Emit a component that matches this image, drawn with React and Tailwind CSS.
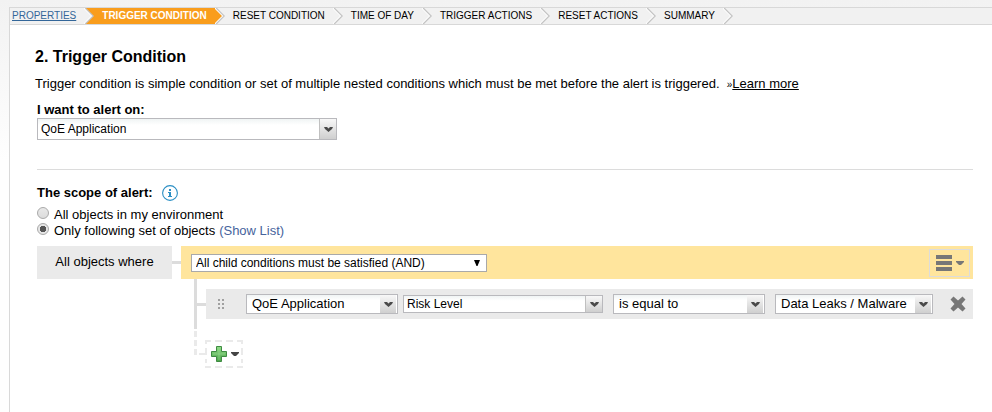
import { useState } from "react";

const steps = [
  { id: "properties", label: "PROPERTIES", done: true },
  { id: "trigger", label: "TRIGGER CONDITION", active: true },
  { id: "reset", label: "RESET CONDITION" },
  { id: "time", label: "TIME OF DAY" },
  { id: "trigger-actions", label: "TRIGGER ACTIONS" },
  { id: "reset-actions", label: "RESET ACTIONS" },
  { id: "summary", label: "SUMMARY" },
];

function Chevron({ left, right }) {
  return (
    <svg className="w-[10px] h-4 shrink-0" viewBox="0 0 10 16" fill="none">
      {left && <path d="M0 0L8 8L0 16Z" fill="#f99d1c" />}
      {right && <path d="M1 0H10V16H1L9 8Z" fill="#f99d1c" />}
      <path d="M0 0L8 8L0 16" stroke="#fff" strokeWidth="1.5" />
      <path d="M1.2 0L9.2 8L1.2 16" stroke="#c4c4c4" strokeWidth="1.2" />
    </svg>
  );
}

function Wizard() {
  return (
    <nav className="flex items-center border-y border-l border-[#d8d8d8] bg-[#f1f1f1] text-[10px] leading-4 whitespace-nowrap">
      {steps.map((step, i) => (
        <div key={step.id} className="flex">
          <span
            className={`pr-2 ${i === 0 ? "pl-[2px]" : "pl-2"} ${
              step.active ? "bg-[#f99d1c] text-white font-bold" : ""
            }`}
          >
            {step.done ? (
              <a href="#properties" className="text-[#336699] underline">
                {step.label}
              </a>
            ) : (
              step.label
            )}
          </span>
          <Chevron left={step.active} right={steps[i + 1]?.active} />
        </div>
      ))}
    </nav>
  );
}

function Combo({ id, label, options, className, selectClass, flat }) {
  return (
    <div className={`relative border border-[#b9b9bd] bg-white ${className}`}>
      <select
        id={id}
        aria-label={label}
        className={`block w-full h-full appearance-none bg-linear-to-b from-[#f0f4f4] to-white to-30% pr-5 outline-none ${selectClass}`}
      >
        {options.map((o) => (
          <option key={o}>{o}</option>
        ))}
      </select>
      <span
        className={`pointer-events-none absolute right-0 top-0 h-full w-[17px] bg-linear-to-b from-[#f8f8f8] to-[#cfcfcf] flex items-center justify-center ${
          flat ? "border-r border-white" : "border-l border-[#c0c0c0]"
        }`}
      >
        <svg className="w-[9px] h-[5px]" viewBox="0 0 9 5">
          <path d="M0 0H3L4.500 1.500L6 0H9L8 2L4.500 5L1 2Z" fill="#4a4a4a" />
        </svg>
      </span>
    </div>
  );
}

function Caret({ color }) {
  return (
    <svg className="w-2 h-1" viewBox="0 0 8 4">
      <path d="M0 0H8V1L5 4H3L0 1Z" fill={color} />
    </svg>
  );
}

function InfoIcon() {
  return (
    <svg className="w-4 h-4" viewBox="0 0 16 16" fill="none">
      <circle cx="8" cy="8" r="7.400" stroke="#2b8fc4" strokeWidth="1.100" />
      <path d="M7 4h2v2H7zM6 7h3v4h1v1H6v-1h1V8H6z" fill="#2b8fc4" />
    </svg>
  );
}

function ConditionRow() {
  return (
    <div className="flex-1 flex items-center h-[30px] pr-[7px] bg-[#eaeaea]">
      <svg className="w-[6px] h-[10px] ml-3 mr-[22px] shrink-0" viewBox="0 0 6 10" fill="#a0a0a0">
        <path d="M0 0h2v2H0zM4 0h2v2H4zM0 4h2v2H0zM4 4h2v2H4zM0 8h2v2H0zM4 8h2v2H4z" />
      </svg>
      <Combo
        label="Object type"
        options={["QoE Application"]}
        className="w-[152px] h-5"
        selectClass="pl-[5px] text-[13px]"
        flat
      />
      <Combo
        label="Property"
        options={["Risk Level"]}
        className="w-[200px] h-[18px] ml-[5px]"
        selectClass="pl-[3px] text-xs"
      />
      <Combo
        label="Operator"
        options={["is equal to"]}
        className="w-[152px] h-5 ml-[10px]"
        selectClass="pl-[5px] text-[13px]"
        flat
      />
      <Combo
        label="Value"
        options={["Data Leaks / Malware"]}
        className="w-[158px] h-5 ml-[10px]"
        selectClass="pl-[5px] text-[13px]"
        flat
      />
      <button aria-label="Remove condition" className="ml-auto">
        <svg className="block w-4 h-4" viewBox="0 0 16 16">
          <path
            d="M3.500 0.500L8 4.500L12.500 0.500L15.500 3.500L11.500 8L15.500 12.500L12.500 15.500L8 11.500L3.500 15.500L0.500 12.500L4.500 8L0.500 3.500Z"
            fill="#777"
          />
        </svg>
      </button>
    </div>
  );
}

function AddButton() {
  return (
    <button aria-label="Add condition" className="relative flex items-center w-[38px] h-7 pl-[6px] gap-1">
      <svg className="absolute inset-0 w-full h-full" viewBox="0 0 38 28" fill="none" stroke="#eaeaea" strokeWidth="2">
        <path d="M0 1H38M0 27H38" strokeDasharray="6 4 7 4 7 4 6" />
        <path d="M1 0V28M37 0V28" strokeDasharray="4 4 7 4 4 3 6" />
      </svg>
      <svg className="w-4 h-4" viewBox="0 0 16 16">
        <defs>
          <linearGradient id="plus" x1="0" y1="0" x2="0" y2="1">
            <stop offset="0" stopColor="#8fdc86" />
            <stop offset="1" stopColor="#4ba34a" />
          </linearGradient>
        </defs>
        <path
          d="M5.500 0.500h5v5h5v5h-5v5h-5v-5h-5v-5h5z"
          fill="url(#plus)"
          stroke="#3f8b42"
        />
        <path d="M8 2v12M2 8h12" stroke="#a5e29c" strokeOpacity="0.500" />
      </svg>
      <Caret color="#444" />
    </button>
  );
}

function App() {
  const [scope, setScope] = useState("subset");

  const radio =
    "appearance-none w-3 h-3 m-0 shrink-0 rounded-full border border-[#a9a9a9] bg-linear-to-b from-[#e8e8e8] to-[#dcdcdc] checked:bg-[radial-gradient(circle,#555_0_3px,#e6e6e6_3px)]";

  return (
    <div
      className="min-h-screen flex flex-col pt-[7px] pl-[9px] bg-linear-to-b from-[#f2f2f2] to-[#fefefe] to-[160px] text-black text-[13px] leading-4"
      style={{ fontFamily: '"Liberation Sans", Arial, sans-serif' }}
    >
      <Wizard />

      <main className="flex-1 border-l border-[#d8d8d8] bg-white pl-[27px] pr-[19px] pt-[22px]">
        <div className="-ml-[2px]">
          <h1 className="text-base leading-5 font-bold">2. Trigger Condition</h1>
          <p className="mt-[7px] leading-5">
            Trigger condition is simple condition or set of multiple nested conditions which must be met
            before the alert is triggered. &nbsp;<span className="text-[10px]">»</span>
            <a href="#learn" className="underline">
              Learn more
            </a>
          </p>
        </div>

        <label htmlFor="alert-on" className="block mt-[7px] font-bold">
          I want to alert on:
        </label>
        <Combo
          id="alert-on"
          options={["QoE Application"]}
          className="w-[300px] h-[22px]"
          selectClass="pl-[3px] text-xs"
        />

        <hr className="mt-[29px] border-[#dcdcdc]" />

        <div className="flex items-center mt-[15px] gap-[9px]">
          <h2 className="font-bold">The scope of alert:</h2>
          <InfoIcon />
        </div>

        <div className="mt-[6px]">
          <div className="flex items-start">
            <input
              type="radio"
              id="scope-all"
              name="scope"
              className={radio}
              checked={scope === "all"}
              onChange={() => setScope("all")}
            />
            <label htmlFor="scope-all" className="pl-[5px]">
              All objects in my environment
            </label>
          </div>
          <div className="flex items-start">
            <input
              type="radio"
              id="scope-subset"
              name="scope"
              className={radio}
              checked={scope === "subset"}
              onChange={() => setScope("subset")}
            />
            <label htmlFor="scope-subset" className="pl-[5px]">
              Only following set of objects
            </label>
            <a href="#list" className="pl-1 text-[#46639c]">
              (Show List)
            </a>
          </div>
        </div>

        {/* condition tree */}
        <div className="flex items-start mt-[7px]">
          <div className="w-[135px] h-[33px] pt-2 text-center bg-[#eaeaea]">All objects where</div>
          <div className="w-[9px] h-[3px] mt-[15px] bg-[#dcdcdc]" />

          <div className="flex-1">
            <div className="flex items-center justify-between h-[33px] pl-[10px] pr-[3px] bg-[#ffe59d]">
              <div className="relative w-[296px] h-[18px] border border-[#a9a9a9] bg-white">
                <select
                  aria-label="Group operator"
                  className="block w-full h-full pl-1 pr-5 appearance-none text-xs outline-none"
                >
                  <option>All child conditions must be satisfied (AND)</option>
                  <option>At least one child condition must be satisfied (OR)</option>
                </select>
                <svg className="pointer-events-none absolute right-[6px] top-[5px] w-[6px] h-[6px]" viewBox="0 0 6 6">
                  <path d="M0 0H6L3.500 6H2.500Z" fill="#000" />
                </svg>
              </div>
              <button
                aria-label="Group menu"
                className="flex items-center justify-center gap-1 w-[41px] h-7 border border-[#dcdcdc]"
              >
                <svg className="w-4 h-4" viewBox="0 0 16 16" fill="#777">
                  <path d="M0 0h16v4H0zM0 6h16v4H0zM0 12h16v4H0z" />
                </svg>
                <Caret color="#777" />
              </button>
            </div>

            <div className="flex pl-[13px]">
              <div className="w-[3px] h-[50px] bg-[#dcdcdc]" />
              <div className="w-[9px] h-[3px] mt-6 bg-[#dcdcdc]" />
              <div className="flex-1 flex pt-[10px]">
                <ConditionRow />
              </div>
            </div>

            <div className="flex items-start pl-[13px]">
              <svg className="w-[11px] h-[28px]" viewBox="0 0 11 28" fill="#eaeaea">
                <path d="M0 2h3v6H0zM0 11h3v6H0zM0 20h3v6H0zM5 24h6v2H5z" />
              </svg>
              <div className="pt-[11px]">
                <AddButton />
              </div>
            </div>
          </div>
        </div>
      </main>
    </div>
  );
}

export default App;
